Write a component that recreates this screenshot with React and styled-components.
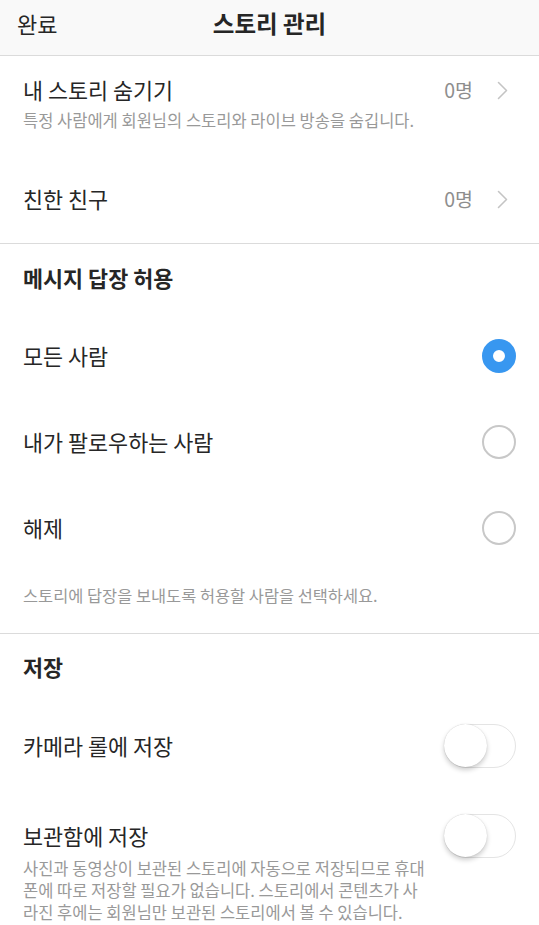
import styled, { createGlobalStyle } from 'styled-components';

const GlobalStyle = createGlobalStyle`
    html, body {
        margin: 0;
        padding: 0;
        background: #ffffff;
    }
    body {
        font-family: "Noto Sans CJK KR", "Noto Sans", sans-serif;
        color: #262626;
    }
`;

const Chevron = () => (
    <svg width="11" height="19" viewBox="0 0 11 19">
        <polyline points="1.5,1.5 9.5,9.5 1.5,17.5" fill="none" stroke="#c4c4c4" strokeWidth="1.6" strokeLinecap="round" strokeLinejoin="round" />
    </svg>
);

const replyOptions = [
    { label: '모든 사람', checked: true },
    { label: '내가 팔로우하는 사람', checked: false },
    { label: '해제', checked: false },
];

const App = () => {
    return (
        <>
            <GlobalStyle />
            <Page>
                <Header>
                    <Done>완료</Done>
                    <Title>스토리 관리</Title>
                    <span />
                </Header>

                <Section $top={20} $bottom={30}>
                    <NavRow>
                        <RowText>
                            <Label>내 스토리 숨기기</Label>
                            <Sub>특정 사람에게 회원님의 스토리와 라이브 방송을 숨깁니다.</Sub>
                        </RowText>
                        <Value>0명</Value>
                        <Chevron />
                    </NavRow>
                    <NavRow $gap={55}>
                        <RowText>
                            <Label>친한 친구</Label>
                        </RowText>
                        <Value>0명</Value>
                        <Chevron />
                    </NavRow>
                </Section>

                <Section $top={20} $bottom={28}>
                    <SectionTitle>메시지 답장 허용</SectionTitle>
                    <OptionList>
                        {replyOptions.map((o) => (
                            <OptionRow key={o.label}>
                                <Label>{o.label}</Label>
                                <Radio $checked={o.checked} />
                            </OptionRow>
                        ))}
                    </OptionList>
                    <Caption>스토리에 답장을 보내도록 허용할 사람을 선택하세요.</Caption>
                </Section>

                <Section $top={19} $bottom={0} $last>
                    <SectionTitle>저장</SectionTitle>
                    <OptionList $gap={22}>
                        <OptionRow>
                            <Label>카메라 롤에 저장</Label>
                            <Toggle />
                        </OptionRow>
                    </OptionList>
                    <ToggleBlock>
                        <ToggleHead>
                            <Label>보관함에 저장</Label>
                            <Toggle />
                        </ToggleHead>
                        <Desc>
                            사진과 동영상이 보관된 스토리에 자동으로 저장되므로 휴대<br />
                            폰에 따로 저장할 필요가 없습니다. 스토리에서 콘텐츠가 사<br />
                            라진 후에는 회원님만 보관된 스토리에서 볼 수 있습니다.
                        </Desc>
                    </ToggleBlock>
                </Section>
            </Page>
        </>
    );
};

export default App;

const Page = styled.div`
    width: 539px;
    height: 925px;
    overflow: hidden;
    background: #ffffff;
`;

const Header = styled.div`
    height: 56px;
    box-sizing: border-box;
    padding: 0 17px 10px;
    display: grid;
    grid-template-columns: 1fr auto 1fr;
    align-items: center;
    background: #f9f9f9;
    border-bottom: 1px solid #dbdbdb;
`;

const Done = styled.span`
    font-size: 22px;
    line-height: 28px;
    color: #262626;
`;

const Title = styled.span`
    font-size: 23.5px;
    font-weight: 700;
    line-height: 28px;
    color: #262626;
`;

const Section = styled.div`
    padding: ${(p) => p.$top}px 0 ${(p) => p.$bottom}px;
    border-bottom: ${(p) => (p.$last ? 'none' : '1px solid #dbdbdb')};
`;

const NavRow = styled.div`
    display: flex;
    align-items: flex-start;
    padding: 0 31px 0 23px;
    margin-top: ${(p) => p.$gap || 0}px;
    svg {
        margin-top: 5px;
        margin-left: 24px;
    }
`;

const RowText = styled.div`
    flex: 1;
    display: flex;
    flex-direction: column;
    gap: 6px;
`;

const Label = styled.div`
    font-size: 21.8px;
    line-height: 28px;
    color: #262626;
`;

const Sub = styled.div`
    font-size: 16.5px;
    line-height: 20px;
    color: #999999;
`;

const Value = styled.div`
    font-size: 19.5px;
    line-height: 28px;
    color: #8e8e8e;
`;

const SectionTitle = styled.div`
    padding: 0 23px;
    font-size: 21.8px;
    font-weight: 700;
    line-height: 28px;
    color: #262626;
`;

const OptionList = styled.div`
    margin-top: ${(p) => p.$gap || 21}px;
    display: flex;
    flex-direction: column;
`;

const OptionRow = styled.div`
    height: 86px;
    display: flex;
    align-items: center;
    justify-content: space-between;
    padding: 0 23px;
`;

const Radio = styled.span`
    width: 34px;
    height: 34px;
    box-sizing: border-box;
    border-radius: 50%;
    display: flex;
    align-items: center;
    justify-content: center;
    border: ${(p) => (p.$checked ? '11px solid #3897f0' : '2px solid #c8c8c8')};
    background: #ffffff;
`;

const Caption = styled.div`
    margin-top: 14px;
    padding: 0 23px;
    font-size: 16.4px;
    line-height: 20px;
    color: #999999;
`;

const Toggle = styled.span`
    position: relative;
    width: 72px;
    height: 44px;
    box-sizing: border-box;
    border-radius: 22px;
    border: 1.5px solid #e4e4e4;
    background: #ffffff;
    &::after {
        content: '';
        position: absolute;
        left: -1px;
        top: -1px;
        width: 43px;
        height: 43px;
        border-radius: 50%;
        background: #ffffff;
        box-shadow: 0 3px 5px rgba(0, 0, 0, 0.2), 0 0 1px rgba(0, 0, 0, 0.2);
    }
`;

const ToggleBlock = styled.div`
    padding: 0 23px;
    margin-top: 25px;
`;

const ToggleHead = styled.div`
    display: flex;
    align-items: center;
    justify-content: space-between;
    height: 44px;
`;

const Desc = styled.div`
    margin-top: -1px;
    font-size: 16.5px;
    line-height: 22px;
    color: #999999;
    white-space: nowrap;
`;
